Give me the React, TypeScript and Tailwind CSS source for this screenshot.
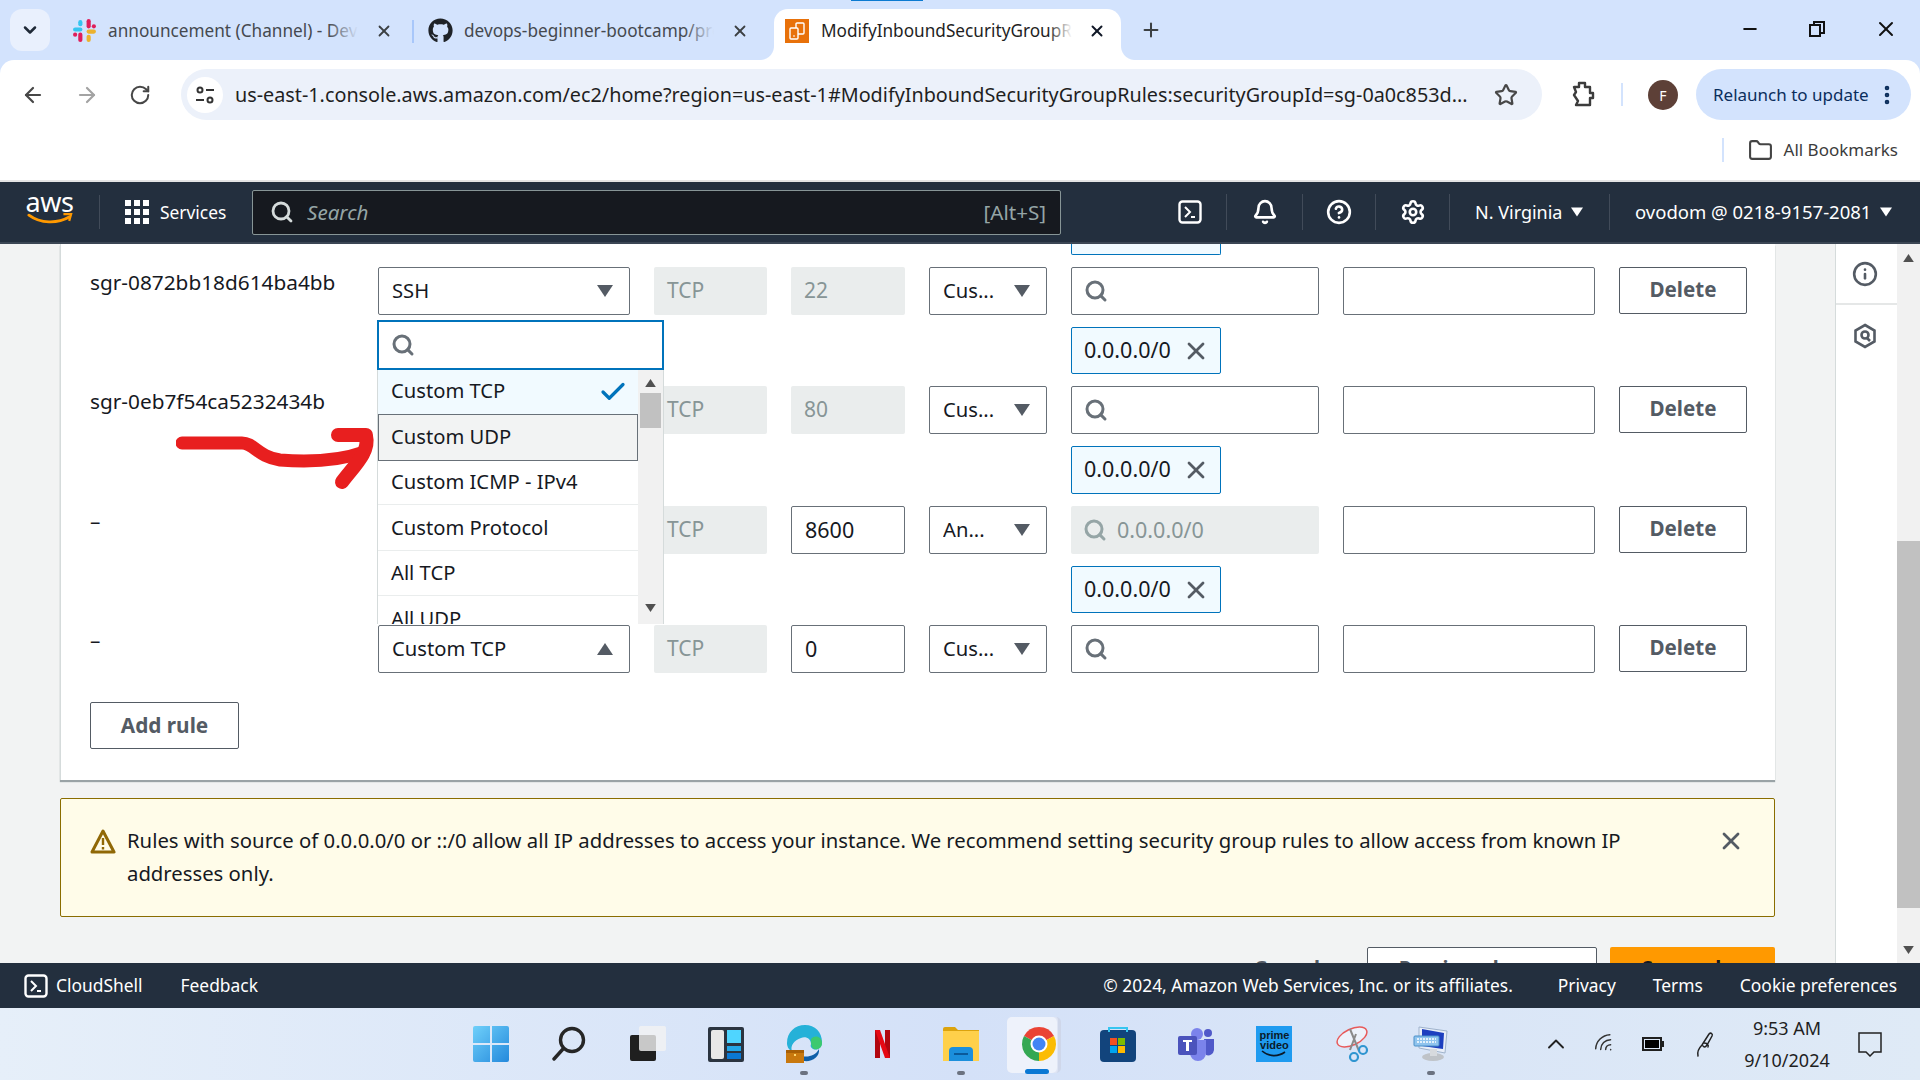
import React from "react";
import { ArrowLeft, ArrowRight, RotateCw, Star, Plus, X, Minus, Search, Check, Folder, Bell, CircleHelp, Settings, ChevronDown, ChevronUp, Info, EllipsisVertical, Wifi } from "lucide-react";
import { FaGithub } from "react-icons/fa";

const Caret = ({ up, c = "#545b64", w = 16, h = 12 }: { up?: boolean; c?: string; w?: number; h?: number }) => (
  <svg width={w} height={h} viewBox="0 0 16 12" className="shrink-0"><path d={up ? "M0 12h16L8 0z" : "M0 0h16L8 12z"} fill={c} /></svg>
);

const Slack = () => (
  <svg width="25" height="25" viewBox="0 0 24 24">
    <rect x="1" y="9" width="9" height="4" rx="2" fill="#36c5f0" /><rect x="6" y="2" width="4" height="6" rx="2" fill="#36c5f0" />
    <rect x="14" y="1" width="4" height="9" rx="2" fill="#e01e5a" /><rect x="19" y="6" width="4" height="4" rx="2" fill="#e01e5a" />
    <rect x="14" y="11" width="9" height="4" rx="2" fill="#ecb22e" /><rect x="14" y="16" width="4" height="7" rx="2" fill="#ecb22e" />
    <rect x="6" y="14" width="4" height="9" rx="2" fill="#e01e5a" /><rect x="1" y="14" width="4" height="4" rx="2" fill="#e01e5a" />
  </svg>
);

const AwsFav = () => (
  <svg width="24" height="24" viewBox="0 0 24 24">
    <rect width="24" height="24" fill="#e8710a" />
    <rect x="11" y="4" width="8" height="11" rx="1" fill="none" stroke="#fff" strokeWidth="1.4" />
    <rect x="5" y="9" width="8" height="11" rx="1" fill="#e8710a" stroke="#fff" strokeWidth="1.4" />
    <path d="M8 17h2" stroke="#fff" strokeWidth="1.2" />
  </svg>
);

const ShellIcon = ({ s = 24 }: { s?: number }) => (
  <svg width={s} height={s} viewBox="0 0 24 24" fill="none" stroke="#fff" strokeWidth="2.4" className="shrink-0">
    <rect x="1.5" y="1.5" width="21" height="21" rx="3" />
    <path d="M7 7l5 5-5 5M13 17h4" strokeWidth="2" />
  </svg>
);

const SearchIcon = ({ c = "#687078", s = 24 }: { c?: string; s?: number }) => <Search size={s} color={c} strokeWidth={3} className="shrink-0" />;

const Select = ({ label, up }: { label: string; up?: boolean }) => (
  <div className="h-12 border border-[#687078] rounded-[2px] bg-white flex items-center justify-between pl-[13px] pr-[16px]">
    <span className="truncate pb-[2px]">{label}</span>
    <Caret up={up} />
  </div>
);

const Disabled = ({ label }: { label: string }) => (
  <div className="h-12 bg-[#eaeded] rounded-[2px] flex items-center pl-[13px] text-[21px] text-[#879596]">{label}</div>
);

const Chip = ({ h }: { h: number }) => (
  <div className={(h === 47 ? "h-[47px]" : "h-[48px]") + " w-[150px] col-start-6 border border-[#0073bb] rounded-[2px] bg-[#f1faff] flex items-center justify-between pl-[12px] pr-[12px]"}>
    <span className="text-[21.5px] pb-[1px]">0.0.0.0/0</span>
    <X size={28} color="#545b64" strokeWidth={2.4} className="shrink-0 -mr-[2px]" />
  </div>
);

const Row = ({ id, type, up, port, src, srcVal, chip }: { id: string; type: string; up?: boolean; port: string; src: string; srcVal?: boolean; chip?: number }) => (
  <div className="grid grid-cols-[264px_252px_113px_114px_118px_248px_252px_128px] gap-x-6 gap-y-3 pl-[29px] text-[20.2px] text-[#16191f]">
    <div className="h-12 leading-[30px] text-[20.8px]">{id}</div>
    <Select label={type} up={up} />
    <Disabled label="TCP" />
    {port === "22" || port === "80" ? <Disabled label={port} /> : (
      <div className="h-12 border border-[#687078] rounded-[2px] flex items-center pl-[13px] text-[21.5px]">{port}</div>
    )}
    <Select label={src} />
    {srcVal ? (
      <div className="h-12 bg-[#eaeded] rounded-[2px] flex items-center pl-[12px] gap-[10px] text-[21.5px] text-[#879596]"><SearchIcon c="#95a5a6" />0.0.0.0/0</div>
    ) : (
      <div className="h-12 border border-[#687078] rounded-[2px] flex items-center pl-[12px]"><SearchIcon /></div>
    )}
    <div className="h-12 border border-[#687078] rounded-[2px]" />
    <div className="h-[47px] border border-[#545b64] rounded-[2px] flex items-center justify-center font-bold text-[20.6px] text-[#545b64] pb-[2px]">Delete</div>
    {chip ? <Chip h={chip} /> : null}
  </div>
);

const Opt = ({ label, cls }: { label: string; cls: string }) => (
  <div className={"flex items-center justify-between pr-[19px] shrink-0 " + cls}>{label}</div>
);

const TaskSlot = ({ children, dot }: { children: React.ReactNode; dot?: boolean }) => (
  <div className="relative w-[78.33px] h-full flex items-center justify-center">
    {children}
    {dot ? <div className="absolute bottom-[5px] left-1/2 -translate-x-1/2 w-[8px] h-[4px] rounded-full bg-[#6b7280]" /> : null}
  </div>
);

export default function App() {
  return (
    <div className="w-[1920px] h-[1080px] overflow-hidden flex flex-col bg-white font-['Noto_Sans',sans-serif]">
      {/* tab strip */}
      <div className="h-[60px] shrink-0 bg-[#d3e3fd] flex items-end relative text-[17.2px] text-[#45494f]">
        <div className="absolute top-0 left-[851px] w-[72px] h-[1px] bg-[#0b7ad1]" />
        <div className="w-[40px] h-[42px] mb-[9px] ml-[10px] rounded-[12px] bg-[#e9f0fd] flex items-center justify-center shrink-0">
          <ChevronDown size={20} strokeWidth={3} color="#1f2937" />
        </div>
        <div className="w-[362px] ml-[22px] h-[51px] pb-[8px] flex items-center shrink-0">
          <Slack />
          <div className="relative ml-[11px] w-[250px] overflow-hidden whitespace-nowrap">
            announcement (Channel) - DevOps
            <div className="absolute right-0 top-0 bottom-0 w-[30px] bg-linear-to-r from-transparent to-[#d3e3fd]" />
          </div>
          <X size={18} color="#3c4043" strokeWidth={2.4} className="ml-[17px] shrink-0" />
        </div>
        <div className="w-[2px] h-[23px] mb-[17px] bg-[#a8c7fa] shrink-0 -ml-[22px] mr-[14px]" />
        <div className="w-[346px] h-[51px] pb-[8px] flex items-center shrink-0">
          <FaGithub size={25} color="#1f2328" className="shrink-0" />
          <div className="relative ml-[11px] w-[250px] overflow-hidden whitespace-nowrap">
            devops-beginner-bootcamp/projects
            <div className="absolute right-0 top-0 bottom-0 w-[30px] bg-linear-to-r from-transparent to-[#d3e3fd]" />
          </div>
          <X size={18} color="#3c4043" strokeWidth={2.4} className="ml-[17px] shrink-0" />
        </div>
        <div className="relative w-[347px] h-[51px] pb-[8px] bg-white rounded-t-[14px] flex items-center pl-[11px] shrink-0 text-[#1f1f1f]">
          <div className="absolute -left-[14px] bottom-0 w-[14px] h-[14px] bg-[radial-gradient(circle_at_0_0,#d3e3fd_13.5px,#ffffff_14.5px)]" />
          <div className="absolute -right-[14px] bottom-0 w-[14px] h-[14px] bg-[radial-gradient(circle_at_100%_0,#d3e3fd_13.5px,#ffffff_14.5px)]" />
          <AwsFav />
          <div className="relative ml-[12px] w-[251px] overflow-hidden whitespace-nowrap">
            ModifyInboundSecurityGroupRules
            <div className="absolute right-0 top-0 bottom-0 w-[24px] bg-linear-to-r from-transparent to-white" />
          </div>
          <X size={18} color="#111827" strokeWidth={2.6} className="ml-[16px] shrink-0" />
        </div>
        <Plus size={22} color="#3c4043" strokeWidth={2.2} className="ml-[19px] mb-[19px] shrink-0" />
        <div className="ml-auto flex items-center h-[60px] pb-[2px] pr-[22px] gap-[48px]">
          <Minus size={20} color="#111" strokeWidth={2.4} />
          <svg width="18" height="18" viewBox="0 0 18 18" fill="none" stroke="#111" strokeWidth="2"><rect x="2" y="5" width="10" height="11" /><path d="M6 5V2h10v11h-4" /></svg>
          <X size={24} color="#111" strokeWidth={2} />
        </div>
      </div>

      {/* toolbar */}
      <div className="h-[60px] shrink-0 bg-[#d3e3fd]">
        <div className="h-[60px] bg-white rounded-t-[14px] flex items-start pt-[9px] pl-[21px]">
          <div className="w-[160px] h-[51px] flex items-center gap-[30px] shrink-0">
            <ArrowLeft size={24} color="#474747" strokeWidth={2.2} />
            <ArrowRight size={24} color="#a3a3a3" strokeWidth={2.2} />
            <RotateCw size={22} color="#474747" strokeWidth={2.2} />
          </div>
          <div className="w-[1361px] h-[51px] rounded-full bg-[#ecf1fa] flex items-center pl-[6px] shrink-0">
            <div className="w-[36px] h-[36px] rounded-full bg-white flex items-center justify-center shrink-0">
              <svg width="22" height="22" viewBox="0 0 22 22" fill="none" stroke="#333" strokeWidth="2"><circle cx="6" cy="6" r="2.5" /><path d="M12 6h8M2 16h8" /><circle cx="16" cy="16" r="2.5" /></svg>
            </div>
            <span className="ml-[12px] w-[1240px] text-[19.8px] text-[#1f1f1f] whitespace-nowrap overflow-hidden">us-east-1.console.aws.amazon.com/ec2/home?region=us-east-1#ModifyInboundSecurityGroupRules:securityGroupId=sg-0a0c853d...</span>
            <Star size={24} color="#474747" strokeWidth={2.2} className="ml-[19px] shrink-0" />
          </div>
          <svg width="24" height="26" viewBox="0 0 24 26" fill="none" stroke="#3c3c3c" strokeWidth="2.4" strokeLinejoin="round" className="ml-[29px] mt-[12px] shrink-0">
            <path d="M3 6h5V2h6v4h5v6h3v5h-3v7H5l2-4-2-3-2-3 2-3z" />
          </svg>
          <div className="w-[2px] h-[23px] bg-[#d3e3fd] ml-[26px] mt-[14px] shrink-0" />
          <div className="w-[30px] h-[30px] rounded-full bg-[#5d4037] text-white text-[14px] flex items-center justify-center ml-[25px] mt-[11px] shrink-0">F</div>
          <div className="ml-[18px] w-[215px] h-[51px] rounded-full bg-[#d3e3fd] flex items-center pl-[17px] text-[17px] text-[#0b2e5c] shrink-0 whitespace-nowrap">
            Relaunch to update
            <EllipsisVertical size={24} color="#0b2e5c" strokeWidth={2.6} className="ml-[6px] shrink-0" />
          </div>
        </div>
      </div>

      {/* bookmarks */}
      <div className="h-[60px] shrink-0 flex items-center justify-end pr-[22px] text-[17px] text-[#3c3c3c]">
        <div className="w-[2px] h-[24px] bg-[#d3e3fd] mr-[24px]" />
        <Folder size={25} color="#444" strokeWidth={2} className="mr-[11px]" />
        All Bookmarks
      </div>

      {/* aws nav */}
      <div className="h-[64px] shrink-0 border-t-[2px] border-b-[2px] border-t-[#e4e4e4] border-b-[#3b4654] bg-[#232f3e] flex items-center text-white text-[18px]">
        <div className="w-[99px] h-[46px] flex flex-col items-center justify-center shrink-0">
          <span className="text-[27px] leading-[22px] tracking-[-0.5px] -mt-[8px]">aws</span>
          <svg width="46" height="12" viewBox="0 0 48 12" fill="none"><path d="M2 2c12 9 30 9 42 2" stroke="#ff9900" strokeWidth="3" strokeLinecap="round" /><path d="M38 1l8 0-2 7" stroke="#ff9900" strokeWidth="2.4" /></svg>
        </div>
        <div className="w-[1px] h-[34px] bg-[#414b59] shrink-0" />
        <div className="grid grid-cols-3 gap-[3px] ml-[25px] shrink-0">
          {Array.from({ length: 9 }).map((_, i) => <div key={i} className="w-[6px] h-[6px] bg-white" />)}
        </div>
        <span className="ml-[11px] w-[92px] shrink-0 text-[17.4px]">Services</span>
        <div className="w-[809px] h-[45px] bg-[#16191f] border border-[#879596] rounded-[2px] flex items-center pl-[17px] pr-[14px] shrink-0 text-[20.6px]">
          <Search size={24} color="#d5dbdb" strokeWidth={2.8} />
          <span className="ml-[13px] italic text-[#95a5a6]">Search</span>
          <span className="ml-auto text-[#95a5a6]">[Alt+S]</span>
        </div>
        <div className="ml-[117px] w-[48px] flex justify-start shrink-0"><ShellIcon /></div>
        <div className="w-[1px] h-[36px] bg-[#414b59] shrink-0" />
        <div className="w-[75px] flex justify-center shrink-0"><Bell size={26} color="#fff" strokeWidth={2.4} /></div>
        <div className="w-[1px] h-[36px] bg-[#414b59] shrink-0" />
        <div className="w-[72px] flex justify-center shrink-0"><CircleHelp size={26} color="#fff" strokeWidth={2.4} /></div>
        <div className="w-[1px] h-[36px] bg-[#414b59] shrink-0" />
        <div className="w-[73px] flex justify-center shrink-0"><Settings size={26} color="#fff" strokeWidth={2.4} /></div>
        <div className="w-[1px] h-[36px] bg-[#414b59] shrink-0" />
        <div className="w-[159px] pl-[25px] flex items-center gap-[9px] shrink-0 whitespace-nowrap">N. Virginia <Caret c="#fff" w={12} h={10} /></div>
        <div className="w-[1px] h-[36px] bg-[#414b59] shrink-0" />
        <div className="pl-[25px] flex items-center gap-[9px] shrink-0 whitespace-nowrap text-[18.5px]">ovodom @ 0218-9157-2081 <Caret c="#fff" w={12} h={10} /></div>
      </div>

      {/* content */}
      <div className="h-[719px] shrink-0 flex bg-[#f2f3f3] overflow-hidden">
        <div className="w-[1775px] shrink-0 pl-[60px] text-[#16191f]">
          <div className="relative w-[1715px] h-[536px] bg-white border-l border-[#d5dbdb] shadow-[0_2px_1px_#9aa3a6]">
            <div className="flex flex-col">
              <div className="ml-[1010px] w-[150px] h-[11px] border-b border-x border-[#0073bb] rounded-b-[2px] bg-[#f1faff]" />
              <div className="mt-[12px] flex flex-col gap-[12px]">
                <Row id="sgr-0872bb18d614ba4bb" type="SSH" port="22" src="Cus..." chip={47} />
                <Row id="sgr-0eb7f54ca5232434b" type="Custom TCP" port="80" src="Cus..." chip={48} />
                <Row id="–" type="Custom TCP" port="8600" src="An..." srcVal chip={47} />
                <Row id="–" type="Custom TCP" up port="0" src="Cus..." />
              </div>
              <div className="mt-[29px] ml-[29px] w-[149px] h-[47px] border border-[#545b64] rounded-[2px] flex items-center justify-center font-bold text-[20.8px] text-[#545b64]">Add rule</div>
            </div>

            {/* dropdown */}
            <div className="absolute left-[316px] top-[76px] w-[287px] h-[304px] flex flex-col text-[20.2px] text-[#16191f]">
              <div className="h-[50px] border-2 border-[#0073bb] bg-white flex items-center pl-[12px] shrink-0"><SearchIcon /></div>
              <div className="flex flex-1 min-h-0 border-l border-r border-[#d5dbdb]">
                <div className="flex-1 flex flex-col overflow-hidden bg-white">
                  <Opt label="Custom TCP" cls="h-[44px] pl-[13px] pb-[3px] bg-[#f1faff]" />
                  <Opt label="Custom UDP" cls="h-[47px] pl-[12px] pb-[2px] bg-[#f2f3f3] border border-[#687078]" />
                  <Opt label="Custom ICMP - IPv4" cls="h-[44px] pl-[13px] pb-[2px] border-b border-[#eaeded]" />
                  <Opt label="Custom Protocol" cls="h-[46px] pl-[13px] border-b border-[#eaeded]" />
                  <Opt label="All TCP" cls="h-[45px] pl-[13px] pb-[2px] border-b border-[#eaeded]" />
                  <Opt label="All UDP" cls="h-[46px] pl-[13px] pb-[2px]" />
                </div>
                <div className="w-[25px] bg-[#f1f1f1] shrink-0 flex flex-col items-center pt-[9px]">
                  <Caret up c="#505050" w={13} h={8} />
                  <div className="w-[21px] h-[35px] bg-[#c1c1c1] mt-[6px]" />
                  <div className="mt-auto mb-[12px]"><Caret c="#505050" w={13} h={8} /></div>
                </div>
              </div>
              <Check size={30} color="#0073bb" strokeWidth={2.6} className="absolute left-[221px] top-[57px]" />
            </div>

            {/* annotation */}
            <svg className="absolute left-[115px] top-[180px]" width="200" height="70" viewBox="0 0 200 70" fill="none">
              <path d="M6 19H66C78 19 82 33 104 36C130 38 160 38 188 28" stroke="#e81f1f" strokeWidth="13" strokeLinecap="round" strokeLinejoin="round" />
              <path d="M162 11H190M190 12C194 28 178 42 166 58" stroke="#e81f1f" strokeWidth="14" strokeLinecap="round" strokeLinejoin="round" />
            </svg>
          </div>

          <div className="mt-[18px] w-[1715px] h-[119px] border border-[#8a6d00] rounded-[2px] bg-[#fffce9] flex items-start pl-[29px] pt-[25px] pr-[29px] text-[20.3px] leading-[33px]">
            <svg width="26" height="26" viewBox="0 0 26 26" className="shrink-0 mt-[4px] mr-[11px]" fill="none">
              <path d="M13 3L24 24H2z" stroke="#906806" strokeWidth="3" strokeLinejoin="round" />
              <path d="M13 10v7M13 19v2.5" stroke="#906806" strokeWidth="2.4" />
            </svg>
            <p className="w-[1530px]">Rules with source of 0.0.0.0/0 or ::/0 allow all IP addresses to access your instance. We recommend setting security group rules to allow access from known IP addresses only.</p>
            <X size={28} color="#545b64" strokeWidth={2.4} className="shrink-0 ml-auto mt-[3px]" />
          </div>

          <div className="mt-[30px] flex justify-end items-start gap-[13px] font-bold text-[20px]">
            <span className="text-[#545b64] mr-[34px] pt-[6px]">Cancel</span>
            <div className="w-[230px] h-[47px] border border-[#545b64] bg-white rounded-[2px] flex items-center justify-center text-[#545b64] pb-[6px]">Preview changes</div>
            <div className="w-[165px] h-[47px] bg-[#ff9900] rounded-[2px] flex items-center justify-center text-[#16191f] pb-[6px]">Save rules</div>
          </div>
        </div>

        <div className="w-[60px] shrink-0" />
        <div className="w-[62px] shrink-0 bg-white border-l border-[#d5dbdb] flex flex-col items-center">
          <div className="w-full h-[61px] border-b-2 border-[#e5e7e7] flex items-center justify-center pr-[3px]">
            <Info size={26} color="#545b64" strokeWidth={2.4} />
          </div>
          <div className="h-[62px] flex items-center justify-center pr-[3px]">
            <svg width="24" height="26" viewBox="0 0 24 26" fill="none" stroke="#545b64" strokeWidth="2.6"><path d="M12 2l9.5 5.5v11L12 24l-9.5-5.5v-11z" /><circle cx="12" cy="12" r="3.5" /><path d="M14 15l3 3" /></svg>
          </div>
        </div>
        <div className="w-[23px] shrink-0 bg-[#f1f1f1] flex flex-col items-center pt-[10px]">
          <Caret up c="#505050" w={13} h={8} />
          <div className="w-full h-[367px] bg-[#c1c1c1] mt-[279px]" />
          <div className="mt-auto mb-[9px]"><Caret c="#505050" w={13} h={8} /></div>
        </div>
      </div>

      {/* footer */}
      <div className="h-[45px] shrink-0 bg-[#232f3e] flex items-center text-white text-[17.4px] whitespace-nowrap">
        <div className="ml-[24px]"><ShellIcon /></div>
        <span className="ml-[8px]">CloudShell</span>
        <span className="ml-[38px]">Feedback</span>
        <span className="ml-auto">© 2024, Amazon Web Services, Inc. or its affiliates.</span>
        <span className="ml-[45px]">Privacy</span>
        <span className="ml-[37px]">Terms</span>
        <span className="ml-[37px] mr-[23px]">Cookie preferences</span>
      </div>

      {/* taskbar */}
      <div className="flex-1 bg-linear-to-r from-[#e6eff9] via-[#d4e1f8] to-[#dfeaf6] flex items-center pl-[452px]">
        <TaskSlot>
          <svg width="36" height="36" viewBox="0 0 36 36">
            <defs><linearGradient id="win" x1="0" y1="0" x2="1" y2="1"><stop offset="0" stopColor="#6fd0fa" /><stop offset="1" stopColor="#2489dc" /></linearGradient></defs>
            <path d="M2 0h15v17H0V2a2 2 0 012-2zM19 0h15a2 2 0 012 2v15H19zM0 19h17v17H2a2 2 0 01-2-2zM19 19h17v15a2 2 0 01-2 2H19z" fill="url(#win)" />
          </svg>
        </TaskSlot>
        <TaskSlot>
          <svg width="34" height="36" viewBox="0 0 34 36" fill="none" stroke="#262626" strokeWidth="3.4" strokeLinecap="round"><circle cx="20" cy="14" r="11.5" /><path d="M11 23L2 33" /></svg>
        </TaskSlot>
        <TaskSlot>
          <svg width="36" height="36" viewBox="0 0 36 36"><rect x="0" y="9" width="26" height="26" rx="2" fill="#1f1f1f" /><rect x="9" y="0" width="27" height="25" rx="2" fill="#f2f2f2" fillOpacity="0.8" /></svg>
        </TaskSlot>
        <TaskSlot>
          <svg width="36" height="35" viewBox="0 0 36 35"><rect width="36" height="35" rx="2" fill="#2b3440" /><rect x="3" y="3" width="13" height="29" rx="2" fill="#e8e8e8" /><rect x="19" y="3" width="14" height="13" fill="#4fd5ff" /><rect x="19" y="19" width="14" height="5" fill="#22a7e8" /><rect x="19" y="26" width="14" height="6" fill="#0a78d4" /></svg>
        </TaskSlot>
        <TaskSlot dot>
          <svg width="36" height="38" viewBox="0 0 36 38"><path d="M1 18C1 7 9 0 19 0c10 0 17 7 17 17 0 6-5 9-9 7-2-1-3-3-2-5 0-5-5-8-10-6C8 15 4 21 6 26 3 25 1 22 1 18z" fill="#25b1d8" /><path d="M25 14c4-5 11-2 11 4 0 5-4 7-8 6-2-1-3-3-3-10z" fill="#3cc96f" /><path d="M14 30c5 3 15 2 19-6 1 8-7 13-15 12-2 0-3-3-4-6z" fill="#0f5fa8" /><rect x="0" y="25" width="18" height="13" fill="#c8780e" /><rect x="0" y="25" width="18" height="3" fill="#a85f05" /><rect x="8" y="29" width="2" height="2" fill="#ffd76a" /></svg>
        </TaskSlot>
        <TaskSlot>
          <svg width="15" height="28" viewBox="0 0 15 28"><path d="M0 0h5v28l-5 0z" fill="#b1060f" /><path d="M10 0h5v28h-5z" fill="#b1060f" /><path d="M0 0h5l10 28h-5z" fill="#e50914" /></svg>
        </TaskSlot>
        <TaskSlot dot>
          <svg width="36" height="34" viewBox="0 0 36 34"><path d="M0 2a2 2 0 012-2h10l3 3h21v31H0z" fill="#dca30d" /><rect x="0" y="4" width="36" height="30" fill="#ffd04a" /><path d="M6 34V24a4 4 0 014-4h16a4 4 0 014 4v10z" fill="#1b8fdc" /><rect x="11" y="26" width="14" height="2" fill="#0a5a9a" /></svg>
        </TaskSlot>
        <TaskSlot>
          <div className="absolute left-[7px] top-[9px] w-[54px] h-[56px] rounded-[5px] bg-[#dfe5f4] border-r-[3px] border-[#cfd7ea]" />
          <div className="absolute left-[7px] top-[9px] w-[50px] h-[56px] rounded-[5px] bg-[#eef2fb]" />
          <svg width="36" height="36" viewBox="0 0 36 36" className="relative">
            <path d="M18 18L3 10A17 17 0 0133 10z" fill="#ea4335" /><path d="M18 18L33 10A17 17 0 0118 35z" fill="#fbbc04" /><path d="M18 18L18 35A17 17 0 013 10z" fill="#34a853" /><circle cx="18" cy="18" r="8.5" fill="#fff" /><circle cx="18" cy="18" r="6.5" fill="#4285f4" />
          </svg>
          <div className="absolute bottom-[6px] left-1/2 -translate-x-[14px] w-[24px] h-[5px] rounded-full bg-[#0a78d4]" />
        </TaskSlot>
        <TaskSlot>
          <svg width="36" height="36" viewBox="0 0 36 36"><rect x="0" y="4" width="36" height="32" rx="4" fill="#12447c" /><path d="M9 6V2h18v4" fill="none" stroke="#35c5f0" strokeWidth="2" /><rect x="10" y="12" width="7" height="7" fill="#f25022" /><rect x="18" y="12" width="7" height="7" fill="#7fba00" /><rect x="10" y="20" width="7" height="7" fill="#00a4ef" /><rect x="18" y="20" width="7" height="7" fill="#ffb900" /></svg>
        </TaskSlot>
        <TaskSlot>
          <svg width="36" height="34" viewBox="0 0 36 34"><circle cx="19" cy="7" r="6" fill="#7b83eb" /><circle cx="30" cy="6" r="4" fill="#5059c9" /><path d="M26 12h10v11a6 6 0 01-8 5z" fill="#5059c9" /><path d="M11 13h17v13a8 8 0 01-16 0z" fill="#7b83eb" /><rect x="0" y="9" width="19" height="19" rx="2" fill="#4b53bc" /><path d="M5 13h9v2h-3v9H8v-9H5z" fill="#fff" /></svg>
        </TaskSlot>
        <TaskSlot>
          <div className="w-[36px] h-[36px] bg-[#1f9bf0] flex flex-col items-center justify-center text-[#0a1a2a] font-['Liberation_Sans',sans-serif] font-bold text-[11px] leading-[10px]">
            <span>prime</span><span>video</span>
            <svg width="26" height="8" viewBox="0 0 26 8" fill="none" stroke="#0a1a2a" strokeWidth="1.6"><path d="M1 1c7 6 16 6 23 1" /></svg>
          </div>
        </TaskSlot>
        <TaskSlot>
          <svg width="34" height="36" viewBox="0 0 34 36" fill="none"><ellipse cx="16" cy="11" rx="16" ry="8" transform="rotate(-25 16 11)" fill="#fff" fillOpacity="0.5" stroke="#e85a5a" strokeWidth="1.5" /><path d="M14 3l9 22M20 8L14 24" stroke="#8a8a8a" strokeWidth="2" /><circle cx="27" cy="24" r="4" stroke="#2f95d0" strokeWidth="2.2" /><circle cx="18" cy="31" r="4" stroke="#2f95d0" strokeWidth="2.2" /></svg>
        </TaskSlot>
        <TaskSlot dot>
          <svg width="36" height="36" viewBox="0 0 36 36"><path d="M6 1l28 4-2 22L6 22z" fill="#e8eef8" stroke="#9fb3cc" /><path d="M9 3l22 4-1 16L9 20z" fill="#1d3fbf" /><rect x="1" y="10" width="25" height="10" rx="1" fill="#8fc4ee" stroke="#4a90c8" /><path d="M4 13h19M4 16h19" stroke="#fff" strokeWidth="1.3" strokeDasharray="2 1" /><ellipse cx="20" cy="31" rx="11" ry="4" fill="#bfc3c8" /><rect x="17" y="23" width="7" height="7" fill="#d7dade" /></svg>
        </TaskSlot>

        <div className="ml-auto mr-[20px] flex items-center h-full shrink-0 text-[#1f1f1f]">
          <div className="w-[52px] flex justify-center"><ChevronUp size={28} color="#222" strokeWidth={1.6} /></div>
          <div className="w-[46px] flex justify-center"><Wifi size={24} color="#333" strokeWidth={1.5} className="-rotate-45" /></div>
          <div className="w-[48px] flex justify-center">
            <div className="w-[20px] h-[14px] border-2 border-[#1f1f1f] p-[1px] relative"><div className="w-full h-full bg-black" /><div className="absolute -right-[4px] top-[2px] w-[2px] h-[6px] bg-[#1f1f1f]" /></div>
          </div>
          <div className="w-[58px] flex justify-center">
            <svg width="20" height="28" viewBox="0 0 20 28" fill="none" stroke="#222" strokeWidth="1.5" strokeLinecap="round"><path d="M3 26c-1-4 1-8 4-11l7-11c2-2 4 0 3 2l-5 9c-2 3-3 2-4 1M9 13c3 0 5 2 4 4" /></svg>
          </div>
          <div className="w-[106px] flex flex-col items-center text-[18px] leading-[32px]">
            <span>9:53 AM</span>
            <span>9/10/2024</span>
          </div>
          <div className="w-[60px] flex justify-center">
            <svg width="26" height="26" viewBox="0 0 26 26" fill="none" stroke="#222" strokeWidth="1.5"><path d="M2 2h22v19h-7l-4 4-4-4H2z" /></svg>
          </div>
        </div>
      </div>
    </div>
  );
}
